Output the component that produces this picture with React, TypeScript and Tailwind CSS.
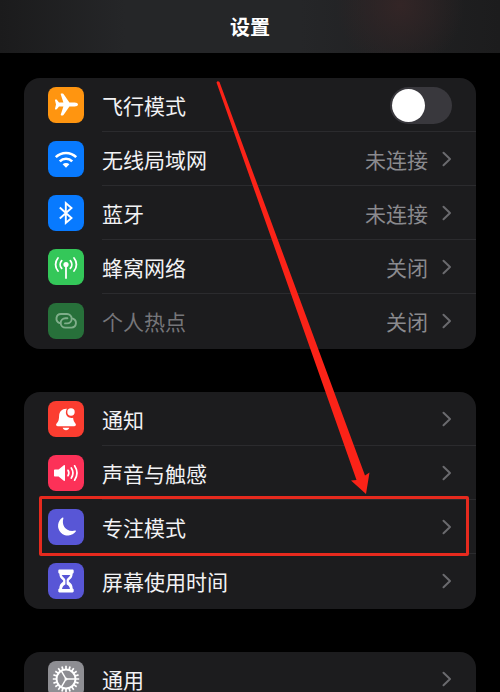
import { useState } from 'react';
import type { ReactNode } from 'react';

interface SettingsItem {
  id: string;
  label: string;
  color: string;
  icon: ReactNode;
  value?: string;
  disabled?: boolean;
  toggle?: boolean;
  highlighted?: boolean;
}

const GEAR_TEETH = Array.from({ length: 20 }, (_, i) => i * 18);

const AirplaneIcon = () => (
  <svg viewBox="0 0 36 36" className="size-full" fill="white">
    <path d="M30 17.5c0 1.200-1.500 2-3.300 2h-5.300l-5.700 8.300c-.3.400-.6.600-1 .6h-1.400c-.5 0-.7-.4-.5-.9l2.600-8h-4.400l-2 2.600c-.2.300-.5.400-.8.400h-.7c-.4 0-.6-.3-.5-.7l1-4.300-1-4.300c-.1-.4.1-.7.500-.7h.7c.3 0 .6.100.8.400l2 2.600h4.400l-2.600-8c-.2-.5 0-.9.500-.9h1.400c.4 0 .7.200 1 .6l5.700 8.300h5.300c1.800 0 3.300.8 3.300 2z" />
  </svg>
);

const WifiIcon = () => (
  <svg viewBox="0 0 36 36" className="size-full" fill="none" stroke="white" strokeWidth="2.600">
    <path d="M7.800 16.200a14.500 14.500 0 0 1 20.400 0" />
    <path d="M11.800 20.300a8.800 8.800 0 0 1 12.400 0" />
    <path d="M14.600 23.300a4.800 4.800 0 0 1 6.800 0L18 26.700z" fill="white" stroke="none" />
  </svg>
);

const BluetoothIcon = () => (
  <svg viewBox="0 0 36 36" className="size-full" fill="none" stroke="white" strokeWidth="1.900" strokeLinejoin="miter">
    <path d="M11.800 12.500 23.500 23l-5.700 5V8l5.700 5-11.700 10.500" />
  </svg>
);

const CellularIcon = () => (
  <svg viewBox="0 0 36 36" className="size-full" fill="none" stroke="white" strokeWidth="1.800" strokeLinecap="round">
    <circle cx="18" cy="15.500" r="2.600" fill="white" stroke="none" />
    <path d="M18 16v13" />
    <path d="M13.700 11.600a5.800 5.800 0 0 0 0 7.800M22.300 11.600a5.800 5.800 0 0 1 0 7.800" />
    <path d="M10 9a10 10 0 0 0 0 13M26 9a10 10 0 0 1 0 13" />
  </svg>
);

const HotspotIcon = () => (
  <svg viewBox="0 0 36 36" className="size-full" fill="none" stroke="#7fae8a" strokeWidth="1.900" strokeLinecap="round">
    <path d="M11.500 20C7 18.300 7.500 11 13 11h6a4.700 4.700 0 0 1 0 9.400h-2" />
    <path d="M24.900 15.600c4.500 1.700 4 9-1.500 9h-6a4.700 4.700 0 0 1 0-9.400h2" />
  </svg>
);

const BellIcon = () => (
  <svg viewBox="0 0 36 36" className="size-full" fill="white">
    <path d="M18.900 7.700c-4.600-.4-7.600 2.700-7.800 7.200-.2 3.600-.4 5-2.300 7.300-.5.600-.7 1.100-.7 1.600 0 .8.600 1.400 1.600 1.400h16.600c1 0 1.600-.6 1.600-1.400 0-.5-.2-1-.7-1.600-1.200-1.500-1.800-3-2.100-5.500-4.300 1-7.600-2.300-7.200-5.800.1-1.300.5-2.300 1-3.200z" />
    <circle cx="23" cy="11" r="3.700" />
    <path d="M14.700 26.700h6.600c-.4 1.600-1.700 2.500-3.300 2.500s-2.900-.9-3.300-2.500z" />
  </svg>
);

const SpeakerIcon = () => (
  <svg viewBox="0 0 36 36" className="size-full" fill="none" stroke="white" strokeWidth="1.700" strokeLinecap="round">
    <path d="M7 14.500h3.600l5.200-4.300c.6-.5 1.200-.2 1.200.6v14.400c0 .8-.6 1.100-1.200.6l-5.200-4.300H7c-.6 0-1-.4-1-1v-5c0-.6.4-1 1-1z" fill="white" stroke="none" />
    <path d="M20 15.300a5 5 0 0 1 0 5.400M23.300 13a9 9 0 0 1 0 10M26.600 10.800a13 13 0 0 1 0 14.400" />
  </svg>
);

const MoonIcon = () => (
  <svg viewBox="0 0 36 36" className="size-full" fill="white">
    <path d="M14.600 8.500c.5-.3 1 .1.800.7-2.200 7.100 2.500 14.200 11.600 12.400.7-.1 1.100.3.800.9a9.800 9.800 0 1 1-13.200-14z" />
  </svg>
);

const HourglassIcon = () => (
  <svg viewBox="0 0 36 36" className="size-full" fill="white">
    <path d="M11.500 6.500h13c.7 0 1.200.5 1.200 1.200v1.500c0 .7-.5 1.200-1 1.300-.2 3.300-1.200 5-3.400 6.500-.7.500-.7 1.500 0 2 2.200 1.500 3.200 3.200 3.400 6.500.5.100 1 .6 1 1.300v1.500c0 .7-.5 1.200-1.200 1.200h-13c-.7 0-1.200-.5-1.200-1.200v-1.500c0-.7.5-1.200 1-1.300.2-3.300 1.200-5 3.400-6.500.7-.5.700-1.500 0-2-2.200-1.500-3.200-3.200-3.400-6.500-.5-.1-1-.6-1-1.300V7.700c0-.7.5-1.200 1.200-1.200z" />
    <path d="M14.700 12.500c1 1.800 3.300 2.300 3.300 4.500 0-2.200 2.300-2.700 3.300-4.500zM18 16v6" fill="#5856d6" stroke="#5856d6" strokeWidth="1.200" />
    <path d="M18 21.300c-2.300 1-3.700 2.400-4 4.700h8c-.3-2.300-1.700-3.700-4-4.700z" fill="#5856d6" />
  </svg>
);

const GearIcon = () => (
  <svg viewBox="0 0 36 36" className="size-full" fill="none" stroke="white" strokeWidth="2">
    <circle cx="18" cy="18" r="9.500" />
    {GEAR_TEETH.map((angle) => (
      <path key={angle} d="M18 8.500V4.800" strokeWidth="1.700" transform={`rotate(${angle} 18 18)`} />
    ))}
    <path d="M18 18h9.500M18 18l-4.700-8.200M18 18l-4.700 8.200" strokeWidth="1.500" />
    <circle cx="18" cy="18" r="1.500" fill="white" stroke="none" />
  </svg>
);

const groups: SettingsItem[][] = [
  [
    { id: 'airplane', label: '飞行模式', color: 'bg-[#ff9510]', icon: <AirplaneIcon />, toggle: true },
    { id: 'wifi', label: '无线局域网', color: 'bg-[#087aff]', icon: <WifiIcon />, value: '未连接' },
    { id: 'bluetooth', label: '蓝牙', color: 'bg-[#087aff]', icon: <BluetoothIcon />, value: '未连接' },
    { id: 'cellular', label: '蜂窝网络', color: 'bg-[#34c759]', icon: <CellularIcon />, value: '关闭' },
    { id: 'hotspot', label: '个人热点', color: 'bg-[#27703a]', icon: <HotspotIcon />, value: '关闭', disabled: true },
  ],
  [
    { id: 'notifications', label: '通知', color: 'bg-[#fb3d30]', icon: <BellIcon /> },
    { id: 'sounds', label: '声音与触感', color: 'bg-[#fc3158]', icon: <SpeakerIcon /> },
    { id: 'focus', label: '专注模式', color: 'bg-[#5856d6]', icon: <MoonIcon />, highlighted: true },
    { id: 'screen-time', label: '屏幕使用时间', color: 'bg-[#5856d6]', icon: <HourglassIcon /> },
  ],
  [{ id: 'general', label: '通用', color: 'bg-[#8e8e93]', icon: <GearIcon /> }],
];

function Chevron() {
  return (
    <svg viewBox="0 0 10 16" className="w-[10px] h-4 shrink-0" fill="none" stroke="#6a6a6e" strokeWidth="2" strokeLinecap="round" strokeLinejoin="round">
      <path d="M1.500 1.800 8 8l-6.500 6.200" />
    </svg>
  );
}

function SettingsRow({ item }: { item: SettingsItem }) {
  const [enabled, setEnabled] = useState(false);

  const content = (
    <>
      <span className={`size-9 shrink-0 rounded-lg overflow-hidden ${item.color}`}>{item.icon}</span>
      <span className={`flex-1 text-left ${item.disabled ? 'text-[#76767a]' : 'text-[#f2f2f4]'}`}>{item.label}</span>
      {item.value && (
        <span className="-mr-1 text-[#8a8a8e]">{item.value}</span>
      )}
    </>
  );

  return (
    <li className="group relative">
      {item.toggle ? (
        <label className="flex h-[54px] items-center gap-[18px] px-6 cursor-pointer">
          {content}
          <input
            type="checkbox"
            role="switch"
            checked={enabled}
            onChange={(e) => setEnabled(e.target.checked)}
            className="appearance-none h-[37px] w-[62px] shrink-0 rounded-full bg-[#39383d] checked:bg-[#34c759] p-0.5 before:block before:size-[33px] before:rounded-full before:bg-white checked:before:translate-x-[25px] before:transition-transform"
          />
        </label>
      ) : (
        <button type="button" className="flex h-[54px] w-full items-center gap-[18px] px-6">
          {content}
          <Chevron />
        </button>
      )}
      <div className="absolute bottom-0 left-[78px] right-0 h-px bg-[#2b2b2e] group-last:hidden" />
      {item.highlighted && (
        <div className="pointer-events-none absolute -top-1 -bottom-0.5 left-[15px] right-[7px] z-10 rounded-xs border-3 border-[#e62a1e]" />
      )}
    </li>
  );
}

export default function App() {
  return (
    <div className="relative h-screen overflow-hidden bg-black text-[21px] leading-6 font-['Noto_Sans_CJK_SC',sans-serif]">
      <header className="flex h-[53px] items-center justify-center bg-[radial-gradient(circle_at_80%_10%,#332526_0%,transparent_16%),linear-gradient(to_right,#1b1b1c,#252628_25%,#252628_60%,#1c1c1d)]">
        <h1 className="text-[20px] font-bold text-white">设置</h1>
      </header>

      <main className="flex flex-col gap-[43px] px-6 pt-[25px]">
        {groups.map((items) => (
          <ul key={items[0].id} className="rounded-2xl bg-[#1c1c1e] pb-px">
            {items.map((item) => (
              <SettingsRow key={item.id} item={item} />
            ))}
          </ul>
        ))}
      </main>

      {/* pointer towards the focus row */}
      <svg viewBox="0 0 500 692" className="pointer-events-none absolute top-0 left-0 w-full" fill="#fb2318" aria-hidden="true">
        <path d="M216.500 82.500Q217.500 80.500 219.500 82L365 475.500l4.500-3L366 494l-15-13.500 5.500-.5z" />
      </svg>
    </div>
  );
}
